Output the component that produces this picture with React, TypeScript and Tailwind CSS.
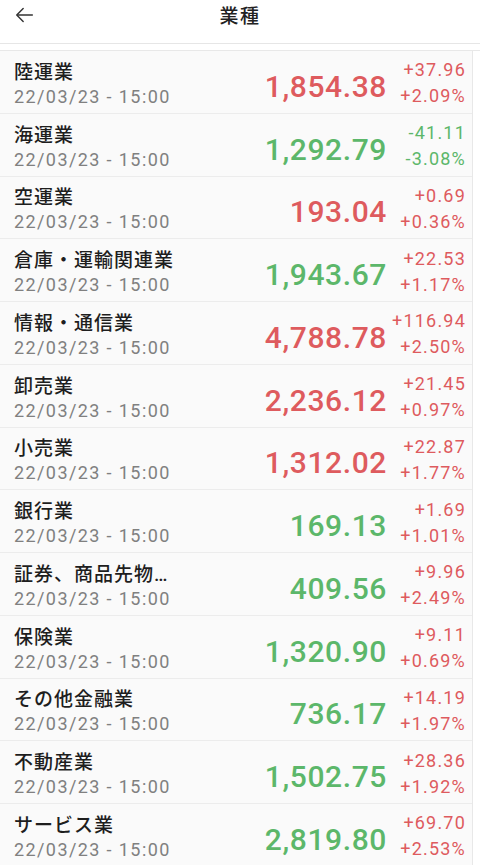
import React from 'react';

type Row = {
  name: string;
  price: string;
  change: string;
  pct: string;
  up: boolean; // price colour
  chUp: boolean; // change colour
};

const rows: Row[] = [
  { name: '陸運業', price: '1,854.38', change: '+37.96', pct: '+2.09%', up: true, chUp: true },
  { name: '海運業', price: '1,292.79', change: '-41.11', pct: '-3.08%', up: false, chUp: false },
  { name: '空運業', price: '193.04', change: '+0.69', pct: '+0.36%', up: true, chUp: true },
  { name: '倉庫・運輸関連業', price: '1,943.67', change: '+22.53', pct: '+1.17%', up: false, chUp: true },
  { name: '情報・通信業', price: '4,788.78', change: '+116.94', pct: '+2.50%', up: true, chUp: true },
  { name: '卸売業', price: '2,236.12', change: '+21.45', pct: '+0.97%', up: true, chUp: true },
  { name: '小売業', price: '1,312.02', change: '+22.87', pct: '+1.77%', up: true, chUp: true },
  { name: '銀行業', price: '169.13', change: '+1.69', pct: '+1.01%', up: false, chUp: true },
  { name: '証券、商品先物…', price: '409.56', change: '+9.96', pct: '+2.49%', up: false, chUp: true },
  { name: '保険業', price: '1,320.90', change: '+9.11', pct: '+0.69%', up: false, chUp: true },
  { name: 'その他金融業', price: '736.17', change: '+14.19', pct: '+1.97%', up: false, chUp: true },
  { name: '不動産業', price: '1,502.75', change: '+28.36', pct: '+1.92%', up: false, chUp: true },
  { name: 'サービス業', price: '2,819.80', change: '+69.70', pct: '+2.53%', up: false, chUp: true },
];

const jp = { fontFamily: 'Roboto, "Noto Sans CJK JP", sans-serif' };

export default function App() {
  return (
    <div className="w-[480px] h-[865px] overflow-hidden bg-white" style={jp}>
      {/* Header */}
      <header className="relative flex h-[44px] items-center justify-center border-b border-[#e6e6e6] bg-white">
        <button className="absolute left-[14px] top-[4px] p-0 text-[#333]">
          <svg width="22" height="22" viewBox="0 0 24 24" fill="none" stroke="currentColor" strokeWidth="1.6" strokeLinecap="round" strokeLinejoin="round">
            <path d="M20 12H4" />
            <path d="M10 5l-7 7 7 7" />
          </svg>
        </button>
        <h1 className="-mt-[8px] text-[19px] font-medium tracking-[1.5px] text-[#222]">業種</h1>
      </header>

      <div className="h-[7px] border-b border-[#e8e8e8] bg-white"></div>

      {/* List */}
      <div className="w-[473px] border-r border-[#e8e8e8]">
        {rows.map((r) => (
          <div
            key={r.name}
            className="flex h-[62.75px] items-center border-b border-[#ececec] bg-[#fafafa] pl-[14px] pr-[6px]"
          >
            <div className="flex min-w-0 flex-1 flex-col pt-[5px]">
              <span className="text-[19px] font-medium leading-[24px] tracking-[1px] text-[#1e1e1e]">{r.name}</span>
              <span className="mt-[1px] text-[18px] leading-[22px] tracking-[1.4px] text-[#808080]">
                22/03/23 - 15:00
              </span>
            </div>
            <span
              className={`pt-[9px] text-[30px] font-medium tracking-[0.6px] ${
                r.up ? 'text-[#de5b5e]' : 'text-[#5cb76a]'
              }`}
            >
              {r.price}
            </span>
            <div
              className={`ml-[2px] flex w-[77px] flex-col items-end pt-[3px] text-[18px] leading-[26px] tracking-[1.2px] ${
                r.chUp ? 'text-[#de5b5e]' : 'text-[#5cb76a]'
              }`}
            >
              <span>{r.change}</span>
              <span>{r.pct}</span>
            </div>
          </div>
        ))}
      </div>
    </div>
  );
}
